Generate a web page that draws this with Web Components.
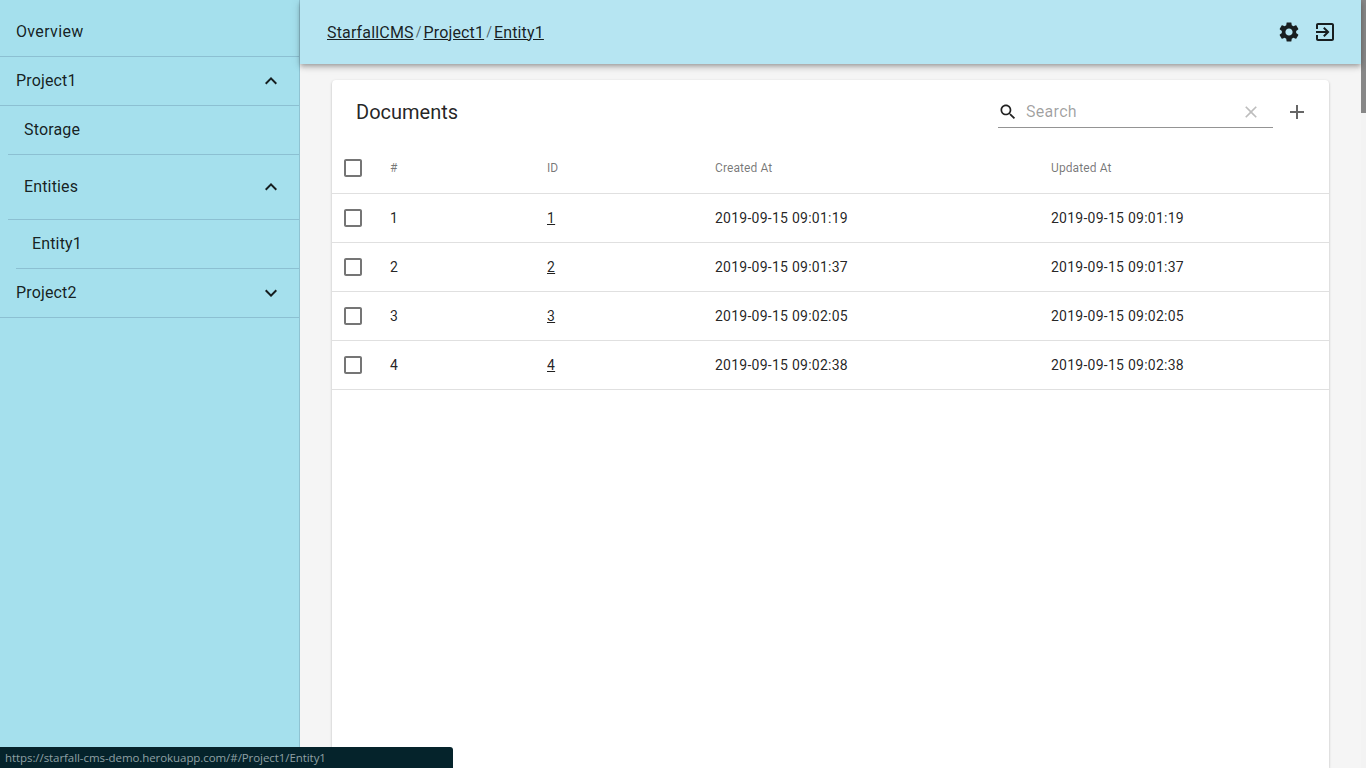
<!DOCTYPE html>
<html lang="en">
<head>
<meta charset="utf-8">
<title>StarfallCMS</title>
<style>
  html, body { margin: 0; height: 100%; overflow: hidden; }
  body { font-family: Roboto, sans-serif; color: rgba(0, 0, 0, 0.87); background: #f5f5f5; }
</style>
</head>
<body>
<app-shell>
  <side-nav slot="nav">
    <nav-item size="first">Overview</nav-item>
    <nav-item chevron="up">Project1</nav-item>
    <nav-item level="1">Storage</nav-item>
    <nav-item level="1" size="tall" chevron="up">Entities</nav-item>
    <nav-item level="2">Entity1</nav-item>
    <nav-item chevron="down">Project2</nav-item>
  </side-nav>
  <top-bar slot="bar">
    <crumb-link>StarfallCMS</crumb-link>
    <crumb-link sep>Project1</crumb-link>
    <crumb-link sep>Entity1</crumb-link>
  </top-bar>
  <doc-card slot="content" heading="Documents">
    <doc-row head cells="#|ID|Created At|Updated At"></doc-row>
    <doc-row cells="1|1|2019-09-15 09:01:19|2019-09-15 09:01:19"></doc-row>
    <doc-row cells="2|2|2019-09-15 09:01:37|2019-09-15 09:01:37"></doc-row>
    <doc-row cells="3|3|2019-09-15 09:02:05|2019-09-15 09:02:05"></doc-row>
    <doc-row cells="4|4|2019-09-15 09:02:38|2019-09-15 09:02:38"></doc-row>
  </doc-card>
  <status-tip slot="overlay">https://starfall-cms-demo.herokuapp.com/#/Project1/Entity1</status-tip>
</app-shell>

<script>
// material icon paths, all on a 24 box
const ICONS = {
  up: 'M7.41 15.41L12 10.83l4.59 4.58L18 14l-6-6-6 6z',
  down: 'M7.41 8.59L12 13.17l4.59-4.58L18 10l-6 6-6-6z',
  gear: 'M19.14 12.94c.04-.3.06-.61.06-.94 0-.32-.02-.64-.07-.94l2.03-1.58c.18-.14.23-.41.12-.61l-1.92-3.32c-.12-.22-.37-.29-.59-.22l-2.39.96c-.5-.38-1.03-.7-1.62-.94l-.36-2.54c-.04-.24-.24-.41-.48-.41h-3.84c-.24 0-.43.17-.47.41l-.36 2.54c-.59.24-1.13.57-1.62.94l-2.39-.96c-.22-.08-.47 0-.59.22L2.74 8.87c-.12.21-.08.47.12.61l2.03 1.58c-.05.3-.09.63-.09.94s.02.64.07.94l-2.03 1.58c-.18.14-.23.41-.12.61l1.92 3.32c.12.22.37.29.59.22l2.39-.96c.5.38 1.03.7 1.62.94l.36 2.54c.05.24.24.41.48.41h3.84c.24 0 .44-.17.47-.41l.36-2.54c.59-.24 1.13-.56 1.62-.94l2.39.96c.22.08.47 0 .59-.22l1.92-3.32c.12-.22.07-.47-.12-.61l-2.01-1.58zM12 15.6c-1.98 0-3.6-1.62-3.6-3.6s1.62-3.6 3.6-3.6 3.6 1.62 3.6 3.6-1.62 3.6-3.6 3.6z',
  exit: 'M10.09 15.59L11.5 17l5-5-5-5-1.41 1.41L12.67 11H3v2h9.67l-2.58 2.59zM19 3H5c-1.11 0-2 .9-2 2v4h2V5h14v14H5v-4H3v4c0 1.1.89 2 2 2h14c1.1 0 2-.9 2-2V5c0-1.1-.9-2-2-2z',
  search: 'M15.5 14h-.79l-.28-.27C15.41 12.59 16 11.11 16 9.5 16 5.91 13.09 3 9.5 3S3 5.91 3 9.5 5.91 16 9.5 16c1.61 0 3.09-.59 4.23-1.57l.27.28v.79l5 4.99L20.49 19l-4.99-5zm-6 0C7.01 14 5 11.99 5 9.5S7.01 5 9.5 5 14 7.01 14 9.5 11.99 14 9.5 14z',
  clear: 'M19 6.41L17.59 5 12 10.59 6.41 5 5 6.41 10.59 12 5 17.59 6.41 19 12 13.41 17.59 19 19 17.59 13.41 12z',
  plus: 'M19 13h-6v6h-2v-6H5v-2h6V5h2v6h6v2z',
  box: 'M19 5v14H5V5h14m0-2H5c-1.1 0-2 .9-2 2v14c0 1.1.9 2 2 2h14c1.1 0 2-.9 2-2V5c0-1.1-.9-2-2-2z'
}

class MatIcon extends HTMLElement {
  constructor() {
    super()
    this.attachShadow({ mode: 'open' })
  }

  connectedCallback() {
    const size = this.getAttribute('size') || 24
    this.shadowRoot.innerHTML = `
      <style>
        :host { display: block; flex: none; width: ${size}px; height: ${size}px; }
        svg { display: block; width: 100%; height: 100%; fill: currentColor; }
      </style>
      <svg viewBox="0 0 24 24"><path d="${ICONS[this.getAttribute('name')]}"/></svg>
    `
  }
}
customElements.define('mat-icon', MatIcon)

class AppShell extends HTMLElement {
  constructor() {
    super()
    this.attachShadow({ mode: 'open' })
    this.shadowRoot.innerHTML = `
      <style>
        :host { display: flex; height: 100vh; overflow: hidden; position: relative; }
        .main { flex: 1; min-width: 0; display: flex; flex-direction: column; }
        .content { flex: 1; min-height: 0; display: flex; padding: 16px 32px 0; }
        .track { flex: none; width: 5px; background: #f3f3f3; }
        .thumb { height: 113px; background: #878787; }
        ::slotted([slot="content"]) { flex: 1; min-width: 0; }
      </style>
      <slot name="nav"></slot>
      <div class="main">
        <slot name="bar"></slot>
        <div class="content"><slot name="content"></slot></div>
      </div>
      <div class="track"><div class="thumb"></div></div>
      <slot name="overlay"></slot>
    `
  }
}
customElements.define('app-shell', AppShell)

class SideNav extends HTMLElement {
  constructor() {
    super()
    this.attachShadow({ mode: 'open' })
    this.shadowRoot.innerHTML = `
      <style>
        :host {
          display: flex;
          flex-direction: column;
          flex: none;
          width: 299px;
          background: #a5e0ed;
          border-right: 1px solid #8fc3d2;
        }
      </style>
      <slot></slot>
    `
  }
}
customElements.define('side-nav', SideNav)

class NavItem extends HTMLElement {
  constructor() {
    super()
    this.attachShadow({ mode: 'open' })
  }

  connectedCallback() {
    const chevron = this.getAttribute('chevron')
    this.shadowRoot.innerHTML = `
      <style>
        :host {
          display: flex;
          align-items: center;
          justify-content: space-between;
          flex: none;
          height: 48px;
          padding: 0 16px;
          font-size: 16px;
          letter-spacing: 0.15px;
          color: rgba(0, 0, 0, 0.87);
          border-bottom: 1px solid #8cc0d2;
        }
        :host([size="first"]) { padding-top: 8px; letter-spacing: 0.35px; }
        :host([size="tall"]) { height: 64px; }
        :host([level="1"]) { margin-left: 8px; }
        :host([level="2"]) { margin-left: 16px; }
        .label { padding-bottom: 2px; }
      </style>
      <span class="label"><slot></slot></span>
      ${chevron ? `<mat-icon name="${chevron}"></mat-icon>` : ''}
    `
  }
}
customElements.define('nav-item', NavItem)

class TopBar extends HTMLElement {
  constructor() {
    super()
    this.attachShadow({ mode: 'open' })
    this.shadowRoot.innerHTML = `
      <style>
        :host {
          display: flex;
          align-items: center;
          flex: none;
          height: 64px;
          padding: 0 24px 0 27px;
          background: #b6e5f2;
          position: relative;
          z-index: 2;
          box-shadow: 0 2px 4px -1px rgba(0, 0, 0, 0.2), 0 4px 5px 0 rgba(0, 0, 0, 0.14), 0 1px 10px 0 rgba(0, 0, 0, 0.12);
        }
        .actions { margin-left: auto; display: flex; gap: 12px; color: rgba(0, 0, 0, 0.87); }
      </style>
      <slot></slot>
      <div class="actions">
        <mat-icon name="gear"></mat-icon>
        <mat-icon name="exit"></mat-icon>
      </div>
    `
  }
}
customElements.define('top-bar', TopBar)

class CrumbLink extends HTMLElement {
  constructor() {
    super()
    this.attachShadow({ mode: 'open' })
  }

  connectedCallback() {
    this.shadowRoot.innerHTML = `
      <style>
        :host { display: inline-flex; font-size: 16px; letter-spacing: 0.16px; color: rgba(0, 0, 0, 0.87); }
        a { color: inherit; text-decoration: underline; }
        span { margin: 0 2px; letter-spacing: 0; color: rgba(0, 0, 0, 0.6); font-size: 14px; line-height: 19px; }
      </style>
      ${this.hasAttribute('sep') ? '<span>/</span>' : ''}
      <a href="#"><slot></slot></a>
    `
  }
}
customElements.define('crumb-link', CrumbLink)

class DocCard extends HTMLElement {
  constructor() {
    super()
    this.attachShadow({ mode: 'open' })
  }

  connectedCallback() {
    this.shadowRoot.innerHTML = `
      <style>
        :host {
          display: block;
          background: #fff;
          border-radius: 4px 4px 0 0;
          box-shadow: 0 1px 3px 0 rgba(0, 0, 0, 0.2), 0 1px 1px 0 rgba(0, 0, 0, 0.14), 0 2px 1px -1px rgba(0, 0, 0, 0.12);
        }
        .head { display: flex; align-items: center; height: 64px; padding: 0 20px 0 24px; }
        h2 { margin: 0; font-size: 20px; font-weight: 400; color: rgba(0, 0, 0, 0.87); }
        .search {
          display: flex;
          align-items: center;
          align-self: flex-start;
          box-sizing: border-box;
          width: 275px;
          height: 32px;
          margin: 16px 12px 0 auto;
          padding-right: 12px;
          border-bottom: 1px solid rgba(0, 0, 0, 0.42);
        }
        .find { margin-right: 8px; color: rgba(0, 0, 0, 0.87); }
        .hint { flex: 1; font-size: 16px; letter-spacing: 0.3px; padding-bottom: 1px; color: rgba(0, 0, 0, 0.38); }
        .clear { color: rgba(0, 0, 0, 0.26); }
        .add { color: rgba(0, 0, 0, 0.6); }
      </style>
      <div class="head">
        <h2>${this.getAttribute('heading')}</h2>
        <div class="search">
          <mat-icon class="find" name="search" size="20"></mat-icon>
          <span class="hint">Search</span>
          <mat-icon class="clear" name="clear" size="20"></mat-icon>
        </div>
        <mat-icon class="add" name="plus"></mat-icon>
      </div>
      <slot></slot>
    `
  }
}
customElements.define('doc-card', DocCard)

class DocRow extends HTMLElement {
  constructor() {
    super()
    this.attachShadow({ mode: 'open' })
  }

  connectedCallback() {
    const [num, id, created, updated] = this.getAttribute('cells').split('|')
    const isHead = this.hasAttribute('head')
    this.shadowRoot.innerHTML = `
      <style>
        :host {
          display: grid;
          grid-template-columns: 58px 157px 168px 336px 1fr;
          align-items: center;
          height: 48px;
          font-size: 14px;
          letter-spacing: 0.25px;
          color: rgba(0, 0, 0, 0.87);
          border-bottom: 1px solid #e0e0e0;
        }
        :host([head]) {
          height: 47px;
          padding-bottom: 2px;
          font-size: 12px;
          letter-spacing: 0.1px;
          color: rgba(0, 0, 0, 0.54);
        }
        mat-icon { margin-left: 9px; color: rgba(0, 0, 0, 0.54); }
        a { color: inherit; text-decoration: underline; }
      </style>
      <mat-icon name="box"></mat-icon>
      <div>${num}</div>
      <div>${isHead ? id : `<a href="#">${id}</a>`}</div>
      <div>${created}</div>
      <div>${updated}</div>
    `
  }
}
customElements.define('doc-row', DocRow)

class StatusTip extends HTMLElement {
  constructor() {
    super()
    this.attachShadow({ mode: 'open' })
    this.shadowRoot.innerHTML = `
      <style>
        :host {
          position: absolute;
          left: 0;
          bottom: 0;
          z-index: 5;
          box-sizing: border-box;
          width: 453px;
          height: 21px;
          padding-left: 5px;
          background: #05232b;
          color: #8fa0a4;
          border-radius: 0 3px 0 0;
          font: 11.5px/21px "Open Sans", sans-serif;
          letter-spacing: -0.07px;
          white-space: nowrap;
        }
      </style>
      <slot></slot>
    `
  }
}
customElements.define('status-tip', StatusTip)
</script>
</body>
</html>
